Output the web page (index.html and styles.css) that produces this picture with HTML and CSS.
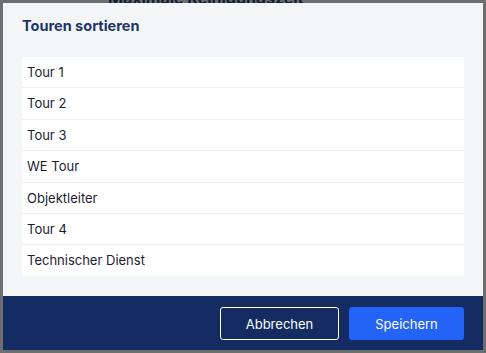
FILE: index.html
```html
<!DOCTYPE html>
<html lang="de">
<head>
  <meta charset="UTF-8">
  <title>Touren sortieren</title>
  <link rel="stylesheet" href="styles.css">
</head>
<body>
  <div class="page">
    <div class="page-title">Maximale Reinigungszeit</div>
  </div>

  <div class="overlay">
    <div class="dialog">
      <div class="dialog-body">
        <h2 class="dialog-title">Touren sortieren</h2>
        <ul class="tour-list">
          <li>Tour 1</li>
          <li>Tour 2</li>
          <li>Tour 3</li>
          <li>WE Tour</li>
          <li>Objektleiter</li>
          <li>Tour 4</li>
          <li>Technischer Dienst</li>
        </ul>
      </div>
      <div class="dialog-footer">
        <button class="btn btn-outline">Abbrechen</button>
        <button class="btn btn-primary">Speichern</button>
      </div>
    </div>
  </div>
</body>
</html>
```

FILE: styles.css
```css
body {
  margin: 0;
  font-family: Inter, "Noto Sans", sans-serif;
  background-color: #6e6e6e;
  width: 486px;
  height: 353px;
  overflow: hidden;
  position: relative;
}
.page {
  display: flow-root;
  height: 100%;
}
.page-title {
  padding-left: 108px;
  margin-top: -10px;
  font-size: 16px;
  font-weight: 700;
  color: #0f1d3a;
  line-height: 16px;
}
.overlay {
  position: absolute;
  top: 3px;
  left: 3px;
  z-index: 1;
}
.dialog {
  width: 480px;
  height: 347px;
  display: flex;
  flex-direction: column;
  background-color: #f4f5f7;
}
.dialog-body {
  flex: 1;
  padding: 13px 19px 0;
}
.dialog-title {
  margin: 0 0 21px;
  font-size: 14.5px;
  line-height: 20px;
  font-weight: 700;
  color: #1d3469;
}
.tour-list {
  list-style: none;
  margin: 0;
  padding: 0;
  background-color: #fff;
}
.tour-list li {
  height: 30.4px;
  line-height: 30.4px;
  padding-left: 5px;
  font-size: 13px;
  color: #1c1c30;
  border-bottom: 1px solid #eef0f3;
}
.tour-list li:last-child {
  border-bottom: none;
}
.dialog-footer {
  display: flex;
  justify-content: flex-end;
  gap: 10px;
  padding: 11px 19px 10px;
  background-color: #142c61;
}
.btn {
  height: 33px;
  font-family: inherit;
  font-size: 13px;
  color: #fff;
  border-radius: 3px;
  cursor: pointer;
}
.btn-outline {
  width: 119px;
  background: transparent;
  border: 1px solid #fff;
}
.btn-primary {
  width: 115px;
  background: #2363f6;
  border: none;
}
```
